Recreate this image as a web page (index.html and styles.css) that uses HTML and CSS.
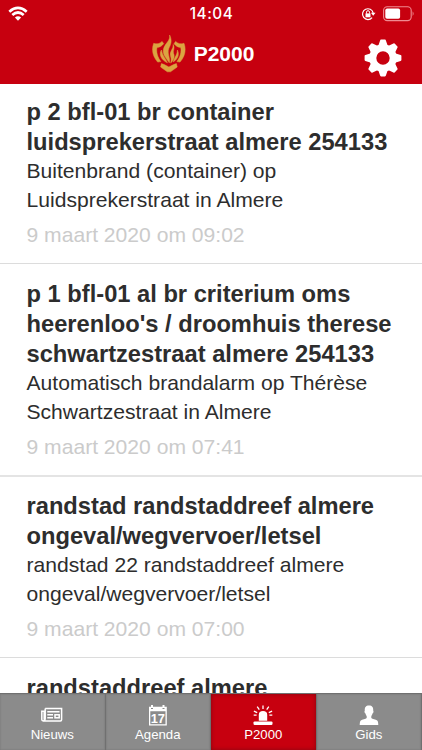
FILE: index.html
```html
<!DOCTYPE html>
<html lang="nl">
<head>
<meta charset="utf-8">
<title>P2000</title>
<link rel="stylesheet" href="styles.css">
</head>
<body>
<div class="app">
  <header class="header">
    <div class="status">
      <svg class="wifi" width="20" height="16" viewBox="0 0 20 16" fill="none" stroke="#fff" stroke-width="2.7">
        <path d="M1.3 5.7Q10-1.9 18.7 5.7M4.3 9Q10 4 15.7 9"/>
        <path d="M6.9 11.5Q10 9 13.1 11.5L10 14.8Z" fill="#fff" stroke="none"/>
      </svg>
      <span class="clock">14:04</span>
      <div class="indicators">
        <svg width="15" height="14" viewBox="0 0 15 14">
          <path d="M11.1 10.6A5.4 5.4 0 1 1 12.2 6" fill="none" stroke="#fff" stroke-width="1.2"/>
          <path d="M9.9 5.8h4.6L12.2 8.8Z" fill="#fff"/>
          <path d="M4.5 6.4h5v3.9h-5Z" fill="#fff"/>
          <path d="M5.5 6.6V5.2a1.5 1.5 0 0 1 3 0v1.4" fill="none" stroke="#fff"/>
        </svg>
        <svg width="32" height="16" viewBox="0 0 32 16">
          <rect x=".6" y=".8" width="27.6" height="13.8" rx="3.6" fill="none" stroke="#f08a91" stroke-width="1.1"/>
          <rect x="2.3" y="2.6" width="14.8" height="10.2" rx="1.8" fill="#fff"/>
          <path d="M29.6 5.3Q31.6 7.7 29.6 10.1Z" fill="#f08a91"/>
        </svg>
      </div>
    </div>
    <div class="titlebar">
      <div class="brand">
        <svg width="34" height="40" viewBox="0 0 34 40" fill="#dba441" stroke="#dba441" stroke-width=".5">
          <path d="M17.6 1C18.7 6.5 13 9.5 11.6 14.6C10.1 20 13.6 23.5 17.3 28.8C18.6 23.7 14.8 19.6 16.8 14.5C18.2 11.4 20.8 7.2 17.6 1Z"/>
          <path d="M21.2 10.5C21.7 14.8 17.4 17.5 18.4 21.5C19 23.7 19.6 25.3 18.7 29C22.2 26.1 22.8 22.5 21.6 19.6C20.6 16.7 23.3 14 21.2 10.5Z"/>
          <path d="M9.4 16C6.8 20.2 8.8 25.6 15.4 28.8C14 25 10.3 21.8 9.4 16ZM25.4 16C25.4 20.5 23 22.3 21.2 27.9C26.4 24.8 27.4 20 25.4 16Z"/>
          <path d="M1.7 9.3C4.8 10.5 7.8 9.7 10.1 7.4L11.7 9.7C9.8 12 7.8 13.3 5 13.4C4 18.2 5.5 23 8.8 27.6L5.7 28.1C.7 22.3-.7 15.8 1.7 9.3Z"/>
          <path d="M32 9.3C28.9 10.5 25.9 9.7 23.6 7.4L22 9.7C23.9 12 25.9 13.3 28.7 13.4C29.7 18.2 28.2 23 24.9 27.6L28 28.1C33 22.3 34.4 15.8 32 9.3Z"/>
          <path d="M9.4 29.6L12.2 30.6L16.9 33L21.6 30.6L24.4 29.6L25.2 33L18.5 37.8H15.3L8.6 33Z"/>
        </svg>
        <h1>P2000</h1>
      </div>
      <svg class="gear" width="38" height="38" viewBox="-19 -19 38 38" fill="#fff">
        <circle r="10.2" fill="none" stroke="#fff" stroke-width="7"/>
        <g id="teeth"><path id="tooth" d="M-4.8-12L-2.9-17.6Q-2.7-18.4-2-18.4H2Q2.7-18.4 2.9-17.6L4.8-12Z"/>
        <use href="#tooth" transform="rotate(45)"/><use href="#tooth" transform="rotate(90)"/><use href="#tooth" transform="rotate(135)"/></g>
        <use href="#teeth" transform="rotate(180)"/>
      </svg>
    </div>
  </header>
  <main class="list">
    <article class="item">
      <h2>p 2 bfl-01 br container<br>luidsprekerstraat almere 254133</h2>
      <p>Buitenbrand (container) op<br>Luidsprekerstraat in Almere</p>
      <time>9 maart 2020 om 09:02</time>
    </article>
    <article class="item">
      <h2>p 1 bfl-01 al br criterium oms<br>heerenloo's / droomhuis therese<br>schwartzestraat almere 254133</h2>
      <p>Automatisch brandalarm op Thérèse<br>Schwartzestraat in Almere</p>
      <time>9 maart 2020 om 07:41</time>
    </article>
    <article class="item">
      <h2>randstad randstaddreef almere<br>ongeval/wegvervoer/letsel</h2>
      <p>randstad 22 randstaddreef almere<br>ongeval/wegvervoer/letsel</p>
      <time>9 maart 2020 om 07:00</time>
    </article>
    <article class="item">
      <h2>randstaddreef almere</h2>
    </article>
  </main>
  <nav class="tabs">
    <a class="tab">
      <svg width="22" height="22" viewBox="0 0 22 22" fill="none" stroke="#fff" stroke-width="1.5">
        <path d="M4.2 4.5H20.6V15.8Q20.6 17 19.4 17H2.2Q.8 17 .8 15.6V7.2H3.2V15.5M4.2 4.5V14.6Q4.2 16.8 2.2 16.8"/>
        <path d="M6.3 7.7H18.5M6.3 10.8H12M6.3 13.7H12"/>
        <rect x="14" y="10.8" width="4.2" height="3"/>
      </svg>
      <span>Nieuws</span>
    </a>
    <a class="tab">
      <svg width="22" height="22" viewBox="0 0 22 22">
        <path d="M2 2.8H4V.9H6V2.8H15.5V.9H17.5V2.8H19.8V21.6H2Z" fill="#fff"/>
        <path d="M3.3 7.3H18.5V20.3H3.3ZM4 4H6V5.1H4ZM15.5 4H17.5V5.1H15.5Z" fill="#8b8b8b"/>
        <text x="10.8" y="18.7" class="day">17</text>
      </svg>
      <span>Agenda</span>
    </a>
    <a class="tab active">
      <svg width="22" height="22" viewBox="0 0 22 22" fill="#fff">
        <rect x="1.5" y="17.4" width="19" height="3.5" rx="1.2"/>
        <path d="M6.8 16.7V10.7Q6.8 7 11 7Q15.2 7 15.2 10.7V16.7Z"/>
        <path d="M11 1.4V5M5.2 2.6L7.3 5.7M16.8 2.6L14.7 5.7M1.9 7.2L5.2 8.7M20.1 7.2L16.8 8.7M1.7 11.2H4.6M20.3 11.2H17.4" fill="none" stroke="#fff" stroke-width="1.3"/>
      </svg>
      <span>P2000</span>
    </a>
    <a class="tab">
      <svg width="22" height="22" viewBox="0 0 22 22" fill="#fff">
        <path d="M11 1.6C14.2 1.6 15.5 3.6 15.2 6.6C15.9 7.4 15.4 9.4 14.5 9.6C14.3 10.9 13.7 11.5 13.3 12.2V14.1C14.2 15.1 17.8 15.4 19.2 16.6C20.1 17.4 20.2 19.3 20.3 21H1.7C1.8 19.3 1.9 17.4 2.8 16.6C4.2 15.4 7.8 15.1 8.7 14.1V12.2C8.3 11.5 7.7 10.9 7.5 9.6C6.6 9.4 6.1 7.4 6.8 6.6C6.5 3.6 7.8 1.6 11 1.6Z"/>
      </svg>
      <span>Gids</span>
    </a>
  </nav>
</div>
</body>
</html>
```

FILE: styles.css
```css
* { box-sizing: border-box; }
body {
  margin: 0;
  background: #fff;
  color: #2d2d2d;
  font-family: "Liberation Sans", Arial, sans-serif;
}
svg { display: block; flex: none; }
h1, h2, p { margin: 0; }
.app {
  width: 422px;
  height: 750px;
  display: flex;
  flex-direction: column;
  overflow: hidden;
}
.header {
  flex: none;
  height: 84px;
  background: #c7000f;
  color: #fff;
}
.status {
  height: 27px;
  display: grid;
  grid-template-columns: 1fr auto 1fr;
  align-items: center;
  padding: 0 7px 0 8px;
}
.clock {
  padding-top: 1px;
  font: 500 15.3px/26px Inter, sans-serif;
  letter-spacing: 0.55px;
}
.indicators {
  display: flex;
  justify-content: flex-end;
  align-items: center;
  gap: 7px;
}
.titlebar {
  height: 57px;
  display: grid;
  grid-template-columns: 1fr auto 1fr;
  align-items: center;
  padding-right: 20px;
  padding-left: 4px;
}
.brand {
  grid-column: 2;
  display: flex;
  align-items: center;
  gap: 8px;
  padding-bottom: 4px;
}
h1 {
  font-size: 21px;
  line-height: 26px;
}
.gear {
  justify-self: end;
  margin-top: 5px;
}
.list {
  flex: 1;
  min-height: 0;
  overflow: hidden;
}
.item {
  padding: 15px 26px 14px 26.5px;
  border-bottom: 1px solid #dcdcdc;
}
.item:first-child { padding-top: 13px; }
.item:nth-child(2) { border-bottom: 2px solid #e4e4e4; }
.item:nth-child(3) { padding-top: 14px; }
h2 {
  font-size: 23.7px;
  line-height: 30px;
  white-space: nowrap;
}
p {
  margin-top: -1px;
  font-size: 21.1px;
  line-height: 29px;
  white-space: nowrap;
}
time {
  display: block;
  margin-top: 6px;
  color: #cbcbcb;
  font-size: 21.1px;
  line-height: 29px;
}
.tabs {
  flex: none;
  height: 57px;
  display: grid;
  grid-template-columns: repeat(4, 1fr);
  border-top: 1px solid #707070;
}
.tab {
  display: flex;
  flex-direction: column;
  align-items: center;
  padding-top: 10px;
  background: #8b8b8b;
  border-right: 1px solid #707070;
  box-shadow: inset 0 0 2px #707070;
  color: #fff;
  font-size: 13.2px;
  line-height: 17px;
}
.tab.active {
  background: #c7000f;
  box-shadow: inset 0 0 4px #850610;
}
.day {
  fill: #fff;
  font-size: 12.8px;
  font-weight: bold;
  text-anchor: middle;
}
```
